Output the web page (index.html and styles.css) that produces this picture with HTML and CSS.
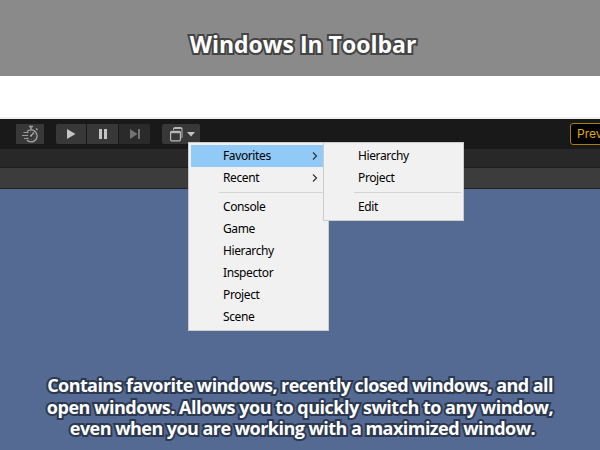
FILE: index.html
```
<!DOCTYPE html>
<html lang="en">
<head>
<meta charset="utf-8">
<title>Windows In Toolbar</title>
<link rel="stylesheet" href="styles.css">
</head>
<body>
<header class="banner"><h1 class="title outlined">Windows In Toolbar</h1></header>
<div class="gap"></div>
<main class="editor">
  <div class="toolbar">
    <div class="btn timer">
      <svg width="28" height="20" viewBox="0 0 28 20" fill="none" stroke="#a4a4a4" stroke-width="1">
        <path d="M11 7.500A6 6 0 1 1 10.800 16" stroke-width="1.300"/>
        <circle cx="15" cy="11.700" r="4" stroke="#707070" stroke-width=".8" stroke-dasharray="1 1.500"/>
        <path d="M13 2.500h4M15 2.500v3M20 4.500l1.500 1.500M15 11.700l3-3.200" stroke-width="1.400"/>
        <path d="M7.500 8.500h5M6 11.500h6M8 14.500h4.500" stroke="#999"/>
        <circle cx="15" cy="11.700" r="1" fill="#aaa" stroke="none"/>
      </svg>
    </div>
    <div class="group">
      <div class="btn play"><svg width="30" height="20"><path d="M11 5l8.500 5-8.500 5z" fill="#c4c4c4"/></svg></div>
      <div class="btn"><svg width="31" height="20"><path d="M12 5h3v10h-3zM17 5h3v10h-3z" fill="#c4c4c4"/></svg></div>
      <div class="btn dim"><svg width="31" height="20"><path d="M11 5l7.500 5-7.500 5zM19 5h2v10h-2z" fill="#727272"/></svg></div>
    </div>
    <div class="btn windows">
      <svg width="38" height="20" fill="none" stroke="#b8b8b8">
        <path d="M11.500 6V4.500Q11.500 3.500 12.500 3.500H19Q20 3.500 20 4.500V13Q20 14 19.500 14"/>
        <path d="M11.500 4.500H20"/>
        <rect x="8.600" y="7.400" width="9.800" height="9.400" rx="1" stroke-width="1.200"/>
        <path d="M8.500 8.500h10" stroke-width="1.400"/>
        <path d="M25 8h8l-4 4.500z" fill="#c4c4c4" stroke="none"/>
      </svg>
    </div>
    <div class="preview">Preview Packages</div>
  </div>
  <div class="tabs"></div>
  <div class="subbar"></div>
  <div class="scene">
    <p class="caption outlined">
      <span class="line one">Contains favorite windows, recently closed windows, and all</span>
      <span class="line two">open windows. Allows you to quickly switch to any window,</span>
      <span class="line three">even when you are working with a maximized window.</span>
    </p>
  </div>
</main>
<div class="menu main-menu">
  <div class="item active"><span>Favorites</span><svg class="arrow" width="6" height="8"><path d="M1 .5L4.500 4 1 7.500"/></svg></div>
  <div class="item"><span>Recent</span><svg class="arrow" width="6" height="8"><path d="M1 .5L4.500 4 1 7.500"/></svg></div>
  <div class="separator"></div>
  <div class="item"><span>Console</span></div>
  <div class="item"><span>Game</span></div>
  <div class="item"><span>Hierarchy</span></div>
  <div class="item"><span>Inspector</span></div>
  <div class="item"><span>Project</span></div>
  <div class="item"><span>Scene</span></div>
</div>
<div class="menu sub-menu">
  <div class="item"><span>Hierarchy</span></div>
  <div class="item"><span>Project</span></div>
  <div class="separator"></div>
  <div class="item"><span>Edit</span></div>
</div>
</body>
</html>
```
FILE: styles.css
```
* { box-sizing: border-box; }
body { margin: 0; width: 600px; height: 450px; overflow: hidden; position: relative; background: #fff; font-family: "Noto Sans", sans-serif; }
svg { display: block; }
.banner { height: 76px; background: #8a8a8a; padding-top: 28px; text-align: center; }
.outlined { color: #fff; font-family: "Open Sans", "Noto Sans", sans-serif; font-weight: 700; paint-order: stroke fill; -webkit-text-stroke: 4px #444; stroke-linejoin: round; }
.title { margin: 0; padding-left: 6px; font-size: 23px; line-height: 32px; }
.gap { height: 43px; border-bottom: 2px solid #f0f0f0; }
.toolbar { height: 30px; background: #191919; display: flex; align-items: flex-start; padding: 5px 0 0 16px; overflow: hidden; }
.btn { height: 20px; background: #383838; border-radius: 2px; }
.timer { border-radius: 0; }
.group { display: flex; gap: 1px; margin: 0 12px; }
.group .btn { border-radius: 0; }
.group .play { border-radius: 2px 0 0 2px; }
.group .dim { background: #2a2a2a; border-radius: 0 2px 2px 0; }
.preview { flex: none; margin: -1px 0 0 370px; height: 22px; width: 130px; border: 1px solid #a87c08; border-radius: 3px; background: #000; color: #e0a90c; font: 12px/20px Inter, sans-serif; padding-left: 6px; white-space: nowrap; }
.tabs { height: 19px; background: #282828; border-bottom: 1px solid #1e1e1e; }
.subbar { height: 21px; background: #3c3c3c; border-bottom: 1px solid #222; }
.scene { height: 261px; background: #546a93; padding-top: 186px; }
.caption { margin: 0; text-align: center; font-size: 18px; line-height: 21.700px; -webkit-text-stroke-color: #2b3850; }
.line { display: block; white-space: nowrap; }
.one { letter-spacing: -.58px; }
.two { letter-spacing: -.49px; }
.three { letter-spacing: -.54px; padding-left: 5px; }
.menu { position: absolute; top: 142px; width: 141px; background: #f1f1f1; border: 1px solid #ccc; padding: 2px; color: #000; font-size: 12px; letter-spacing: -.38px; }
.main-menu { left: 188px; height: 189px; }
.sub-menu { left: 323px; height: 79px; }
.item { height: 22px; line-height: 22px; padding-left: 32px; display: flex; align-items: center; justify-content: space-between; padding-right: 8px; }
.active { background: #91c9f7; }
.arrow { fill: none; stroke: #333; stroke-width: 1.200; }
.separator { height: 1px; margin: 3px 0 3px 28px; background: #d4d4d4; }
```
